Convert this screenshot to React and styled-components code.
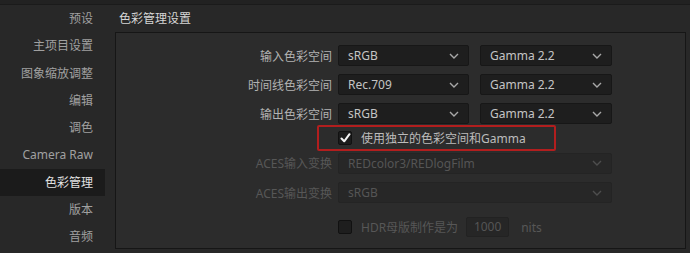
import React from "react";
import styled, { createGlobalStyle } from "styled-components";

const Global = createGlobalStyle`
  html, body { margin: 0; padding: 0; background: #282828; }
  body { font-family: "Noto Sans", "Noto Sans CJK SC", sans-serif; font-size: 12px; }
  * { box-sizing: border-box; }
`;

const Page = styled.div`
  width: 690px;
  height: 253px;
  background: #282828;
  display: flex;
  flex-direction: column;
  overflow: hidden;
`;

const TopStrip = styled.div`
  height: 5px;
  background: #222222;
  border-bottom: 1px solid #1b1b1b;
  flex: none;
`;

const Body = styled.div`
  flex: 1;
  display: flex;
`;

const Sidebar = styled.div`
  width: 105px;
  flex: none;
  display: flex;
  flex-direction: column;
`;

const NavItem = styled.div`
  height: 27.25px;
  line-height: 28px;
  padding-right: 12px;
  text-align: right;
  white-space: nowrap;
  font-family: "Noto Sans", "Noto Sans CJK SC", sans-serif;
  color: ${(p) => (p.$active ? "#e2e2e2" : "#a0a0a0")};
  background: ${(p) => (p.$active ? "#1b1b1b" : "transparent")};
`;

const Main = styled.div`
  flex: 1;
  display: flex;
  flex-direction: column;
  padding: 0 4px 4px 10px;
`;

const Title = styled.div`
  height: 27px;
  line-height: 28px;
  padding-left: 4px;
  color: #d6d6d6;
  flex: none;
`;

const Panel = styled.div`
  flex: 1;
  background: #2c2c2c;
  border: 1px solid #161616;
  display: flex;
  flex-direction: column;
`;

const Row = styled.div`
  display: flex;
  align-items: center;
  gap: 6px;
  height: ${(p) => p.$h || 21}px;
  margin-top: ${(p) => p.$mt || 0}px;
`;

const Label = styled.div`
  width: 216px;
  text-align: right;
  white-space: nowrap;
  color: ${(p) => (p.$disabled ? "#575757" : "#b2b2b2")};
`;

const Select = styled.div`
  width: ${(p) => p.$w}px;
  height: 21px;
  border-radius: 2px;
  background: ${(p) => (p.$disabled ? "#272727" : "#1e1e1e")};
  border: 1px solid ${(p) => (p.$disabled ? "#242424" : "#171717")};
  display: flex;
  align-items: center;
  justify-content: space-between;
  padding: 0 9px 0 9px;
  color: ${(p) => (p.$disabled ? "#555555" : "#c4c4c4")};
  white-space: nowrap;
`;

const Selects = styled.div`
  display: flex;
  gap: 11px;
`;

const Highlight = styled.div`
  margin-top: 1px;
  margin-left: 201px;
  width: 239px;
  height: 26px;
  border: 2px solid #b21e1e;
  border-radius: 2px;
  display: flex;
  align-items: center;
  gap: 9px;
  padding-left: 19px;
  color: #bcbcbc;
`;

const Check = styled.div`
  width: 14px;
  height: 14px;
  border-radius: 2px;
  background: ${(p) => (p.$checked ? "#1c1c1c" : "#1e1e1e")};
  border: 1px solid #111;
  display: flex;
  align-items: center;
  justify-content: center;
  flex: none;
`;

const CheckRow = styled.div`
  display: flex;
  align-items: center;
  height: 20px;
  margin-top: 14px;
  padding-left: 222px;
  color: #575757;
  white-space: nowrap;
`;

const CheckText = styled.span`
  margin-left: 9px;
`;

const NumBox = styled.div`
  width: 43px;
  height: 20px;
  margin-left: 8px;
  border-radius: 2px;
  background: #262626;
  border: 1px solid #222;
  color: #555;
  text-align: center;
  line-height: 18px;
`;

const Unit = styled.span`
  margin-left: 12px;
`;

const Chevron = ({ disabled }) => (
  <svg width="10" height="6" viewBox="0 0 10 6">
    <path
      d="M1 1 L5 5 L9 1"
      fill="none"
      stroke={disabled ? "#4e4e4e" : "#a8a8a8"}
      strokeWidth="1.4"
    />
  </svg>
);

const Dropdown = ({ w, value, disabled }) => (
  <Select $w={w} $disabled={disabled}>
    <span>{value}</span>
    <Chevron disabled={disabled} />
  </Select>
);

const nav = ["预设", "主项目设置", "图象缩放调整", "编辑", "调色", "Camera Raw", "色彩管理", "版本", "音频"];

export default function App() {
  return (
    <Page>
      <Global />
      <TopStrip />
      <Body>
        <Sidebar>
          {nav.map((n) => (
            <NavItem key={n} $active={n === "色彩管理"}>{n}</NavItem>
          ))}
        </Sidebar>
        <Main>
          <Title>色彩管理设置</Title>
          <Panel>
            <Row $mt={12}>
              <Label>输入色彩空间</Label>
              <Selects>
                <Dropdown w={131} value="sRGB" />
                <Dropdown w={132} value="Gamma 2.2" />
              </Selects>
            </Row>
            <Row $mt={8}>
              <Label>时间线色彩空间</Label>
              <Selects>
                <Dropdown w={131} value="Rec.709" />
                <Dropdown w={132} value="Gamma 2.2" />
              </Selects>
            </Row>
            <Row $mt={8}>
              <Label>输出色彩空间</Label>
              <Selects>
                <Dropdown w={131} value="sRGB" />
                <Dropdown w={132} value="Gamma 2.2" />
              </Selects>
            </Row>
            <Highlight>
              <Check $checked>
                <svg width="11" height="10" viewBox="0 0 11 10">
                  <path d="M1.5 5.5 L4.2 8.3 L9.5 1.2" fill="none" stroke="#f2f2f2" strokeWidth="2" strokeLinecap="round" strokeLinejoin="round" />
                </svg>
              </Check>
              <span>使用独立的色彩空间和Gamma</span>
            </Highlight>
            <Row $mt={1} $h={22}>
              <Label $disabled>ACES输入变换</Label>
              <Dropdown w={274} value="REDcolor3/REDlogFilm" disabled />
            </Row>
            <Row $mt={8}>
              <Label $disabled>ACES输出变换</Label>
              <Dropdown w={274} value="sRGB" disabled />
            </Row>
            <CheckRow>
              <Check />
              <CheckText>HDR母版制作是为</CheckText>
              <NumBox>1000</NumBox>
              <Unit>nits</Unit>
            </CheckRow>
          </Panel>
        </Main>
      </Body>
    </Page>
  );
}
